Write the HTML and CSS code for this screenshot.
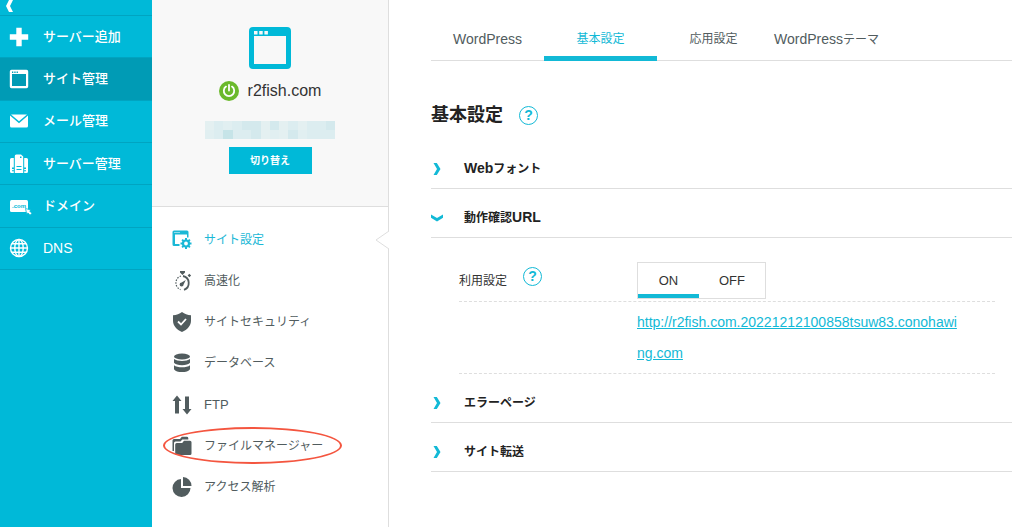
FILE: index.html
```html
<!DOCTYPE html>
<html lang="ja">
<head>
<meta charset="utf-8">
<meta name="viewport" content="width=device-width, initial-scale=1">
<title>サイト管理</title>
<link rel="stylesheet" href="styles.css">
</head>
<body>
<div class="app">
  <nav class="sidebar" aria-label="メイン">
    <button class="collapse" type="button" aria-label="メニューを閉じる">
      <svg width="8" height="12" viewBox="0 0 8 12"><path d="M4 0h4L5 6l3 6H4L1 6z" fill="#fff"/></svg>
    </button>
    <ul class="main-nav">
      <li><a href="#"><svg class="icon" viewBox="0 0 20 20"><path d="M7.300 .8h5.400v6.500h6.500v5.400h-6.500v6.500H7.300v-6.500H.8V7.300h6.500z"/></svg>サーバー追加</a></li>
      <li><a class="current" href="#"><svg class="icon" viewBox="0 0 20 20"><path fill-rule="evenodd" d="M2.500 .8h15A1.700 1.700 0 0 1 19.200 2.500v15a1.700 1.700 0 0 1-1.700 1.700h-15A1.700 1.700 0 0 1 .8 17.500v-15A1.700 1.700 0 0 1 2.500 .8zM3 5v12h14V5zM3 2.500V4h1.300V2.500zm2.300 0V4h1.300V2.500zm2.300 0V4h1.300V2.500z"/></svg>サイト管理</a></li>
      <li><a href="#"><svg class="icon" viewBox="0 0 20 20"><path d="M2 3.500h16l-8 6.800zM1 4.600l9 7.600 9-7.600V15a1.500 1.500 0 0 1-1.500 1.500h-15A1.500 1.500 0 0 1 1 15z"/></svg>メール管理</a></li>
      <li><a href="#"><svg class="icon" viewBox="0 0 20 20"><path fill-rule="evenodd" d="M7.500 .5H12l2.200 2V19H5.800V2.500A1.700 1.700 0 0 1 7.500 .5zM7.500 12v1h5v-1zm0 3v1h5v-1zM11 2.500V4h1.500V2.500z"/><path d="M2.500 4H4.800v9.500H3v1.500h1.800v1.300H3v1h1.800V19H2.500A1.500 1.500 0 0 1 1 17.500v-12A1.500 1.500 0 0 1 2.500 4zM15.200 4h2.300A1.500 1.500 0 0 1 19 5.500v12a1.500 1.500 0 0 1-1.500 1.500h-2.300v-1.700H17v-1h-1.800V15H17v-1.500h-1.800z"/></svg>サーバー管理</a></li>
      <li><a href="#"><svg class="icon icon-domain" viewBox="0 0 24 20"><rect x="1" y="4" width="18" height="12" rx="1.500"/><text x="10" y="12" text-anchor="middle">.com</text><path d="M16.500 12.500l5.500 1.500-1.300 1.200 2.300 2-2 2-2-2.300-1.300 1.300z" stroke="#00b9d8" stroke-width=".8"/></svg>ドメイン</a></li>
      <li><a href="#"><svg class="icon" viewBox="0 0 20 20"><g fill="none" stroke="#fff" stroke-width="1.400"><circle cx="10" cy="10" r="8.500"/><ellipse cx="10" cy="10" rx="4.200" ry="8.500"/><path d="M10 1.500v17M1.500 10h17M3 5.800h14M3 14.200h14"/></g></svg><span class="latin">DNS</span></a></li>
    </ul>
  </nav>

  <aside class="site-panel">
    <section class="site-card">
      <svg class="site-icon" viewBox="0 0 42 42"><path fill="#00b9d8" fill-rule="evenodd" d="M4 0h34a4 4 0 0 1 4 4v34a4 4 0 0 1-4 4H4a4 4 0 0 1-4-4V4a4 4 0 0 1 4-4zM5 9v28h32V9zM5 4v3.500h3.500V4zm5.200 0v3.500h3.500V4zm5.200 0v3.500h3.500V4z"/></svg>
      <div class="site-name">
        <svg width="20" height="20" viewBox="0 0 20 20"><circle cx="10" cy="10" r="10" fill="#6bb92c"/><path d="M7 5.600a5.200 5.200 0 1 0 6 0M10 4v5.500" fill="none" stroke="#fff" stroke-width="1.800" stroke-linecap="round"/></svg>
        <span>r2fish.com</span>
      </div>
      <svg class="mosaic" viewBox="0 0 130 18" shape-rendering="crispEdges"><path fill="#dcedf0" d="M0 0h130v18H0z"/><path fill="#e4f0f1" d="M0 0h9v9H0zM56 0h9v18h-9zM74 0h9v9h-9zM93 0h9v9h-9zM74 9h9v9h-9z"/><path fill="#d4e9ed" d="M37 0h19v9H37zM65 0h9v9h-9zM46 9h10v9H46zM121 0h9v9h-9zM83 9h10v9H83z"/><path fill="#e1eff1" d="M0 9h9v9H0zM18 0h9v9h-9zM65 9h9v9h-9zM93 9h9v9h-9z"/><path fill="#c6e4e8" d="M18 9h10v9H18z"/></svg>
      <button class="switch-button" type="button">切り替え</button>
    </section>
    <ul class="sub-nav">
      <li><a class="current" href="#"><svg class="icon" viewBox="0 0 20 20"><path fill-rule="evenodd" d="M2 .5h13A1.500 1.500 0 0 1 16.500 2v5.500H15v-3H3V14h4.500v2H2A1.500 1.500 0 0 1 .5 14.500V2A1.500 1.500 0 0 1 2 .5zM2.500 2v1h1V2zm2 0v1h1V2zm2 0v1h1V2z"/><circle cx="14" cy="13.500" r="3" fill="none" stroke="currentColor" stroke-width="2.200"/><path d="M14 8v2.500M14 16.500V19M8.500 13.500H11M17 13.500h2.500M10.100 9.600l1.800 1.800M16.100 15.600l1.800 1.800M10.100 17.400l1.800-1.800M16.100 11.400l1.800-1.800" stroke="currentColor" stroke-width="2"/></svg>サイト設定</a>
        <svg class="notch" viewBox="0 0 14 18"><path d="M14 0L1 9l13 9" fill="#fff" stroke="#dedede"/></svg></li>
      <li><a href="#"><svg class="icon" viewBox="0 0 20 20"><path d="M8 0h5v1.500L10.500 4 8 1.500zM15.600 4.500l1.700-1.700 1.800 1.800-1.700 1.600z"/><path d="M11 5a7.200 7.200 0 0 1 1 13.800" fill="none" stroke="currentColor" stroke-width="1.800"/><path d="M9 5a7.200 7.200 0 0 0-.5 13.600" fill="none" stroke="currentColor" stroke-width="1.200" stroke-dasharray="1.500 1.300"/><path d="M13.800 9l-2.200 4.400a2 2 0 1 1-2-2z"/></svg>高速化</a></li>
      <li><a href="#"><svg class="icon" viewBox="0 0 20 20"><path d="M10 0c2.500 2 5.500 3 9 3.200v5.500c0 5-3.500 8.800-9 11.300-5.500-2.500-9-6.300-9-11.300V3.200C4.500 3 7.500 2 10 0z"/><path d="M6 9.500l3 3 5-5.500" fill="none" stroke="#fff" stroke-width="1.800"/></svg>サイトセキュリティ</a></li>
      <li><a href="#"><svg class="icon" viewBox="0 0 20 20"><ellipse cx="10" cy="3.500" rx="8" ry="3"/><path d="M2 6c3 2.500 13 2.500 16 0v3.800c-2 3.200-14 3.200-16 0zM2 12.200c3 2.800 13 2.800 16 0v4c-2 3.800-14 3.800-16 0z"/></svg>データベース</a></li>
      <li><a href="#"><svg class="icon" viewBox="0 0 20 20"><path d="M5 .5L9.500 6H7v12.500H3V6H.5zM15 19.500L10.500 14H13V1.500h4V14h2.500z"/></svg><span class="ftp">FTP</span></a></li>
      <li class="marked"><a href="#"><svg class="icon" viewBox="0 0 20 20"><path d="M.5 15V4.500A1.500 1.500 0 0 1 2 3h6l1.800-2.200h5A1.500 1.500 0 0 1 16.300 2v1.500h-6L8.500 5.500h-5A1.500 1.500 0 0 0 2 7v8z"/><path d="M3.200 8.500a1.500 1.500 0 0 1 1.500-1.500h5.500L12 4.800h6a1.500 1.500 0 0 1 1.500 1.500v11.200A1.500 1.500 0 0 1 18 19H4.700a1.500 1.500 0 0 1-1.500-1.500z"/></svg>ファイルマネージャー</a></li>
      <li><a href="#"><svg class="icon" viewBox="0 0 20 20"><path d="M9 2v9h9.500A9 9 0 1 1 9 2z"/><path d="M11 0a9 9 0 0 1 8.500 9H11z"/></svg>アクセス解析</a></li>
    </ul>
  </aside>

  <main class="content">
    <nav class="tabs" aria-label="設定">
      <a href="#"><span class="latin">WordPress</span></a>
      <a class="current" href="#">基本設定</a>
      <a href="#">応用設定</a>
      <a href="#"><span class="latin">WordPress</span>テーマ</a>
    </nav>
    <div class="title">
      <h1>基本設定</h1>
      <button class="help" type="button" aria-label="ヘルプ">?</button>
    </div>
    <section>
      <h2><button class="accordion" type="button" aria-expanded="false"><svg class="chevron" viewBox="0 0 12 12"><path d="M2.500 0h3.300L9.500 6 5.800 12H2.500L6 6z"/></svg><span><span class="latin">Web</span>フォント</span></button></h2>
    </section>
    <section>
      <h2><button class="accordion" type="button" aria-expanded="true"><svg class="chevron" viewBox="0 0 12 12"><path d="M0 2.500v3.300L6 9.500 12 5.800V2.500L6 6z"/></svg><span>動作確認<span class="latin">URL</span></span></button></h2>
      <div class="settings">
        <div class="setting">
          <div class="setting-name" id="usage">利用設定 <button class="help" type="button" aria-label="利用設定のヘルプ">?</button></div>
          <div class="toggle" role="radiogroup" aria-labelledby="usage">
            <input type="radio" id="use-on" name="use" checked><label for="use-on">ON</label>
            <input type="radio" id="use-off" name="use"><label for="use-off">OFF</label>
          </div>
        </div>
        <div class="setting url-row">
          <a class="url" href="#">http://r2fish.com.20221212100858tsuw83.conohawing.com</a>
        </div>
      </div>
    </section>
    <section>
      <h2><button class="accordion" type="button" aria-expanded="false"><svg class="chevron" viewBox="0 0 12 12"><path d="M2.500 0h3.300L9.500 6 5.800 12H2.500L6 6z"/></svg><span>エラーページ</span></button></h2>
    </section>
    <section>
      <h2><button class="accordion" type="button" aria-expanded="false"><svg class="chevron" viewBox="0 0 12 12"><path d="M2.500 0h3.300L9.500 6 5.800 12H2.500L6 6z"/></svg><span>サイト転送</span></button></h2>
    </section>
  </main>
</div>
</body>
</html>
```

FILE: styles.css
```css
*, ::after { box-sizing: border-box; }

body {
  margin: 0;
  background: #fff;
  color: #515c5e;
  font: 12px/18px "Liberation Sans", "Noto Sans CJK JP", sans-serif;
}

ul { margin: 0; padding: 0; list-style: none; }
a { color: inherit; text-decoration: none; }
button { padding: 0; border: 0; background: none; color: inherit; font: inherit; cursor: pointer; }
svg { display: block; flex: none; }
.latin { font-size: 14px; }

.app {
  display: grid;
  grid-template-columns: 152px 237px minmax(0, 1fr);
  min-height: 100vh;
}

/* Main navigation */
.sidebar { background: #00b9d8; color: #fff; }
.collapse {
  display: flex;
  align-items: center;
  width: 100%;
  height: 16px;
  padding: 0 0 4px 5px;
  border-bottom: 1px solid #00a4c1;
}
.main-nav {
  display: grid;
  grid-auto-rows: 1fr;
  min-height: 254px;
  font-size: 13px;
  font-weight: 500;
}
.main-nav a {
  display: flex;
  align-items: center;
  gap: 14px;
  height: 100%;
  padding-left: 9px;
  border-bottom: 1px solid #00a4c1;
}
.main-nav .current { background: #009bb5; }
.icon { width: 20px; height: 20px; fill: currentColor; }
.main-nav .icon-domain { width: 24px; margin-right: -4px; }
.icon-domain text { fill: #00b9d8; font: bold 6px "Liberation Sans", sans-serif; }

/* Site panel */
.site-panel { border-right: 1px solid #dedede; }
.site-card {
  display: flex;
  flex-direction: column;
  align-items: center;
  min-height: 207px;
  padding-top: 27px;
  border-bottom: 1px solid #dedede;
  background: #f8f8f8;
}
.site-icon { width: 42px; height: 42px; }
.site-name {
  display: flex;
  align-items: center;
  gap: 9px;
  margin: 12px 0 20px;
  color: #333;
  font-size: 16px;
  line-height: 20px;
}
.mosaic { width: 130px; height: 18px; }
.switch-button {
  width: 83px;
  height: 27px;
  margin-top: 8px;
  background: #00b9d8;
  color: #fff;
  font-size: 10px;
  font-weight: 700;
}
.sub-nav {
  display: grid;
  grid-auto-rows: 1fr;
  min-height: 289px;
  padding-left: 20px;
  margin-top: 12px;
}
.sub-nav li { position: relative; }
.sub-nav a { display: flex; align-items: center; gap: 12px; height: 100%; }
.sub-nav .current { color: #1bb8d6; }
.ftp { font-size: 13px; }
.notch {
  position: absolute;
  top: 12px;
  right: -1px;
  width: 14px;
  height: 18px;
}
.marked::after {
  content: "";
  position: absolute;
  top: 2px;
  left: -9px;
  width: 179px;
  height: 37px;
  border: 2px solid #f4553f;
  border-radius: 50%;
  pointer-events: none;
}

/* Content */
.content { padding: 0 12px 32px 42px; }
.tabs { display: flex; border-bottom: 1px solid #dedede; }
.tabs a {
  flex: 0 0 113px;
  height: 60px;
  padding-top: 30px;
  text-align: center;
  white-space: nowrap;
}
.tabs .current {
  height: 61px;
  margin-bottom: -1px;
  border-bottom: 5px solid #12b9d6;
  color: #12b9d6;
}
.title {
  display: flex;
  align-items: center;
  gap: 16px;
  padding: 40px 0 11px;
}
h1 { margin: 0; color: #222; font-size: 18px; line-height: 28px; }
.help {
  width: 19px;
  height: 19px;
  border: 1px solid #12b9d6;
  border-radius: 50%;
  color: #12b9d6;
  font-size: 14px;
  font-weight: 700;
  line-height: 17px;
  text-align: center;
}
h2 { margin: 0; font-size: 12px; }
.accordion {
  display: flex;
  align-items: center;
  gap: 21px;
  width: 100%;
  height: 49px;
  padding-top: 9px;
  border-bottom: 1px solid #dedede;
  color: #222;
  text-align: left;
}
.chevron { width: 12px; height: 12px; fill: #12b9d6; }

.settings { padding: 18px 17px 0 28px; }
.setting {
  display: flex;
  align-items: center;
  height: 46px;
  padding-top: 4px;
  border-bottom: 1px dashed #dedede;
}
.setting-name {
  display: flex;
  align-items: center;
  gap: 16px;
  flex: 0 0 178px;
  color: #333;
}
.setting-name .help { margin-bottom: 8px; }
.toggle {
  position: relative;
  display: flex;
  height: 37px;
  border: 1px solid #dedede;
  background: #fff;
  color: #333;
  font-size: 13px;
}
.toggle input { position: absolute; opacity: 0; }
.toggle label {
  min-width: 61px;
  padding-top: 9px;
  border-bottom: 4px solid transparent;
  text-align: center;
}
.toggle label:last-child { min-width: 66px; }
.toggle input:checked + label { border-color: #12b9d6; }
.setting.url-row {
  height: auto;
  padding: 5px 32px 4px 178px;
}
.url {
  color: #12b9d6;
  font-size: 14px;
  line-height: 31px;
  text-decoration: underline;
  word-break: break-all;
}
```
